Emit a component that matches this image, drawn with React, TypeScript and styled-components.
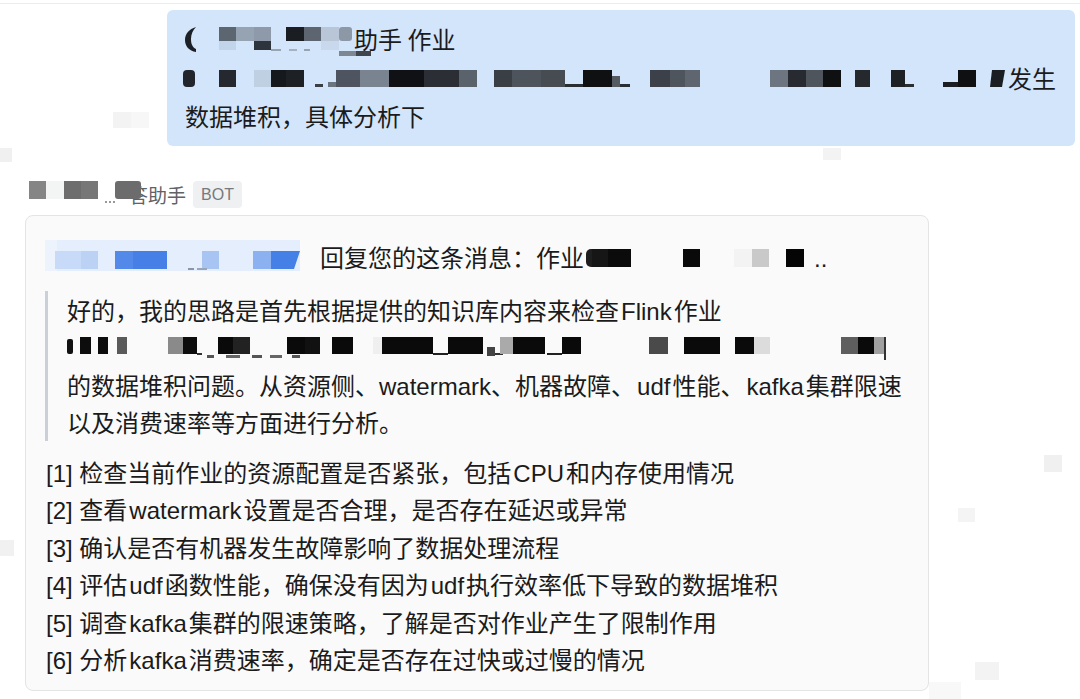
import React from "react";
import styled, { createGlobalStyle } from "styled-components";

type Cell = [number, number, number, number, string, number?];

const Global = createGlobalStyle`
  html, body { margin: 0; padding: 0; background: #ffffff; }
  body {
    font-family: "Noto Sans CJK SC", "Noto Sans", sans-serif;
    color: #1b1b1b;
  }
`;

const Page = styled.div`
  position: relative;
  width: 1080px;
  height: 699px;
  overflow: hidden;
  box-sizing: border-box;
  padding-top: 3px;
  display: flex;
  flex-direction: column;
`;

const WatermarkLayer = styled.svg`
  position: absolute;
  left: 0;
  top: 0;
  pointer-events: none;
`;

const TopRule = styled.div`
  height: 1px;
  background: #ececec;
`;

const Bubble = styled.div`
  position: relative;
  align-self: flex-end;
  margin: 6px 5px 0 0;
  width: 908px;
  box-sizing: border-box;
  padding: 10px 18px 10px 18px;
  background: #d2e5fb;
  border-radius: 6px;
  font-size: 24px;
  line-height: 38.5px;
`;

/* a line of plain text (may hold inline latin spans) */
const Line = styled.div<{ $h: number }>`
  white-space: nowrap;
  height: ${(p) => p.$h}px;
`;

/* a line that mixes redaction mosaics with text */
const MixRow = styled.div<{ $h: number }>`
  display: flex;
  align-items: center;
  white-space: nowrap;
  height: ${(p) => p.$h}px;
`;

const Txt = styled.span``;

const En = styled.span<{ $gap?: number }>`
  font-family: "Liberation Sans", Arial, sans-serif;
  line-height: 1;
  margin: 0 ${(p) => p.$gap ?? 2}px;
`;

const Header = styled.div`
  position: relative;
  display: flex;
  align-items: center;
  height: 27px;
  margin: 35px 0 0 29px;
`;

const SenderName = styled.span`
  font-size: 19px;
  line-height: 27px;
  color: #606266;
`;

const BotTag = styled.span`
  margin-left: 7px;
  height: 27px;
  padding: 0 8px;
  border-radius: 4px;
  background: #eff0f1;
  color: #76797e;
  font-family: "Liberation Sans", Arial, sans-serif;
  font-size: 16px;
  line-height: 27px;
`;

const Card = styled.div`
  position: relative;
  margin: 7px 0 0 25px;
  width: 904px;
  box-sizing: border-box;
  background: #fafafa;
  border: 1px solid #e4e4e4;
  border-radius: 8px;
  padding: 22px 20px 12px 20px;
  font-size: 24px;
  line-height: 37.5px;
`;

const Quote = styled.div`
  margin: 15.5px 0 0 -1px;
  border-left: 3px solid #cbd0d8;
  padding-left: 19px;
`;

const List = styled.div`
  margin-top: 12px;
`;

const MosaicSvg = styled.svg<{ $ml?: number; $mr?: number }>`
  display: block;
  flex-shrink: 0;
  overflow: visible;
  margin-left: ${(p) => p.$ml ?? 0}px;
  margin-right: ${(p) => p.$mr ?? 0}px;
`;

const OverlayMosaic = styled(MosaicSvg)`
  position: relative;
  z-index: 1;
`;

function Cells({ cells }: { cells: Cell[] }) {
  return (
    <>
      {cells.map(([x, y, w, h, c, rx], i) => (
        <rect key={i} x={x} y={y} width={w} height={h} fill={c} rx={rx ?? 0} />
      ))}
    </>
  );
}

/* ---------- mosaic data ---------- */

const faintMarks: Cell[] = [
  [113, 112, 18, 16, "#f3f3f3"],
  [131, 112, 18, 16, "#f7f7f7"],
  [0, 148, 12, 14, "#f0f0f0"],
  [823, 148, 18, 12, "#f3f3f3"],
  [1044, 455, 18, 17, "#f0f0f0"],
  [958, 508, 17, 14, "#f4f4f4"],
  [0, 540, 14, 16, "#f1f1f1"],
  [975, 662, 24, 18, "#f3f3f3"],
  [929, 682, 32, 17, "#f8f8f8"],
];

const bubbleLine1: Cell[] = [
  [36, 5, 17, 14, "#5c6670"],
  [53, 5, 18, 14, "#96a3b2"],
  [71, 5, 17, 14, "#8e9aa9"],
  [103, 5, 18, 14, "#1a1d22"],
  [121, 5, 17, 14, "#5d6670"],
  [138, 5, 18, 14, "#b8c6d8"],
  [156, 5, 13, 14, "#8d98a6", 3],
  [36, 19, 17, 9, "#c2d4ea"],
  [71, 19, 17, 9, "#2e343c"],
  [138, 19, 18, 9, "#c9d8ec"],
  [88, 27, 10, 2, "#9aa4b0"],
  [106, 27, 8, 2, "#a8b2be"],
  [121, 27, 6, 2, "#9aa4b0"],
  [156, 29, 17, 5, "#7d8794"],
  [173, 29, 15, 5, "#3f454d"],
];

const bubbleLine2: Cell[] = [
  [0, 6, 12, 17, "#22262c", 4],
  [36, 6, 17, 17, "#25292f"],
  [71, 6, 17, 17, "#c0d0e3"],
  [88, 6, 15, 17, "#15181c"],
  [103, 6, 18, 17, "#1d2024"],
  [132, 20, 8, 3, "#3a3f46"],
  [145, 18, 8, 5, "#6c7480"],
  [153, 6, 24, 17, "#4e5560"],
  [177, 6, 29, 17, "#7a8490"],
  [206, 6, 35, 17, "#0f1114"],
  [241, 6, 35, 17, "#2b2f35"],
  [276, 6, 18, 17, "#5a626c"],
  [311, 6, 18, 17, "#3a3f46"],
  [329, 6, 29, 17, "#4e545c"],
  [358, 6, 24, 17, "#474c53"],
  [382, 20, 18, 3, "#2a2e33"],
  [400, 6, 29, 17, "#0e1012"],
  [429, 12, 8, 11, "#555b63"],
  [437, 20, 10, 3, "#2a2e33"],
  [467, 6, 20, 17, "#3c4048"],
  [487, 6, 15, 17, "#4f555d"],
  [502, 6, 15, 17, "#5f666f"],
  [587, 6, 18, 17, "#6d7580"],
  [605, 6, 18, 17, "#272b31"],
  [623, 6, 17, 17, "#4f555d"],
  [640, 6, 18, 17, "#0e1012"],
  [672, 6, 15, 17, "#25292e"],
  [708, 6, 14, 17, "#1d2125"],
  [722, 20, 9, 3, "#2a2e33"],
  [760, 18, 15, 5, "#1a1d21"],
  [775, 6, 18, 17, "#0e1012"],
];

const headerCells: Cell[] = [
  [0, 0, 17, 18, "#858585"],
  [17, 0, 18, 18, "#f3f4f4"],
  [35, 0, 17, 18, "#6d6d6d"],
  [52, 0, 17, 18, "#777777"],
  [86, 0, 26, 18, "#6c6c6c", 3],
  [76, 20, 2, 2, "#999999"],
  [80, 20, 2, 2, "#999999"],
  [84, 20, 2, 2, "#999999"],
];

const bandCells: Cell[] = [
  [0, 1, 255, 31, "#e5eefc"],
  [0, 1, 12, 31, "#edf3fd"],
  [10, 12, 26, 18, "#c7daf7"],
  [36, 12, 17, 18, "#bcd2f5"],
  [70, 12, 18, 18, "#5389e8"],
  [88, 12, 34, 18, "#4680e6"],
  [157, 12, 17, 18, "#a7c4f3"],
  [208, 12, 18, 18, "#8bb1f0"],
  [143, 29, 6, 2, "#8a96a8"],
  [152, 29, 10, 2, "#9aa6b8"],
];

const replyBlack: Cell[] = [
  [2, 10, 12, 18, "#1e1e1e", 5],
  [8, 10, 16, 18, "#161616"],
  [24, 10, 23, 18, "#0b0b0b"],
  [99, 10, 17, 18, "#0a0a0a"],
  [150, 10, 18, 18, "#f3f3f3"],
  [168, 10, 17, 18, "#c9c9c9"],
  [202, 10, 18, 18, "#050505"],
];

const quoteLine2: Cell[] = [
  [0, 6, 6, 15, "#111111", 2],
  [13, 4, 11, 17, "#0d0d0d"],
  [31, 4, 10, 17, "#0d0d0d"],
  [50, 4, 10, 17, "#5a5a5a"],
  [101, 4, 15, 17, "#8a8a8a"],
  [116, 4, 14, 17, "#0d0d0d"],
  [130, 20, 5, 2, "#333333"],
  [151, 4, 15, 17, "#0a0a0a"],
  [166, 4, 17, 17, "#222222"],
  [140, 22, 7, 3, "#555555"],
  [159, 22, 14, 3, "#666666"],
  [185, 22, 10, 3, "#555555"],
  [203, 22, 12, 3, "#666666"],
  [225, 22, 8, 3, "#555555"],
  [220, 4, 18, 17, "#0a0a0a"],
  [238, 4, 15, 17, "#111111"],
  [265, 4, 21, 17, "#0a0a0a"],
  [306, 4, 9, 17, "#efefef"],
  [315, 4, 51, 17, "#0a0a0a"],
  [366, 20, 15, 2, "#222222"],
  [381, 4, 35, 17, "#0a0a0a"],
  [420, 14, 8, 9, "#444444"],
  [428, 20, 8, 2, "#333333"],
  [433, 4, 13, 17, "#aaaaaa"],
  [446, 4, 32, 17, "#0a0a0a"],
  [480, 20, 15, 2, "#222222"],
  [495, 4, 19, 17, "#0a0a0a"],
  [582, 4, 19, 17, "#4a4a4a"],
  [617, 4, 36, 17, "#0a0a0a"],
  [668, 4, 19, 17, "#0a0a0a"],
  [687, 4, 16, 17, "#dcdcdc"],
  [774, 4, 17, 17, "#5e5e5e"],
  [791, 4, 16, 17, "#0a0a0a"],
  [807, 4, 10, 17, "#a0a0a0"],
  [817, 4, 2, 23, "#333333"],
];

export default function App() {
  return (
    <>
      <Global />
      <Page>
        <WatermarkLayer width={1080} height={699}>
          <Cells cells={faintMarks} />
        </WatermarkLayer>
        <TopRule />
        <Bubble>
          <MixRow $h={38.5}>
            <MosaicSvg width={171} height={34} $ml={-2}>
              <path
                d="M13 5 C6 7 2 12 2 18 C2 24 6 29 13 30 L13 27 C9 25 8 21 8 17 C8 12 10 8 13 5 Z"
                fill="#1d2026"
              />
              <Cells cells={bubbleLine1} />
            </MosaicSvg>
            <Txt>助手 作业</Txt>
          </MixRow>
          <MixRow $h={38.5}>
            <MosaicSvg width={822} height={28} $ml={-2} $mr={3}>
              <Cells cells={bubbleLine2} />
              <polygon points="809,6 822,6 819,23 807,23" fill="#1a1d21" />
            </MosaicSvg>
            <Txt>发生</Txt>
          </MixRow>
          <Line $h={38.5}>数据堆积，具体分析下</Line>
        </Bubble>

        <Header>
          <OverlayMosaic width={112} height={27} $mr={-12}>
            <Cells cells={headerCells} />
          </OverlayMosaic>
          <SenderName>答助手</SenderName>
          <BotTag>BOT</BotTag>
        </Header>

        <Card>
          <MixRow $h={37.5}>
            <MosaicSvg width={255} height={34} $ml={-1} $mr={20}>
              <Cells cells={bandCells} />
              <polygon points="226,12 255,12 249,30 226,30" fill="#4580e6" />
            </MosaicSvg>
            <Txt>回复您的这条消息：作业</Txt>
            <MosaicSvg width={220} height={34} $mr={10}>
              <Cells cells={replyBlack} />
            </MosaicSvg>
            <Txt>
              <En $gap={0}>..</En>
            </Txt>
          </MixRow>

          <Quote>
            <Line $h={37.5}>
              好的，我的思路是首先根据提供的知识库内容来检查<En>Flink</En>作业
            </Line>
            <MixRow $h={37.5}>
              <MosaicSvg width={820} height={28}>
                <Cells cells={quoteLine2} />
              </MosaicSvg>
            </MixRow>
            <Line $h={37.5}>
              的数据堆积问题。从资源侧、<En $gap={0}>watermark</En>、机器故障、<En>udf</En>性能、<En>kafka</En>集群限速
            </Line>
            <Line $h={37.5}>以及消费速率等方面进行分析。</Line>
          </Quote>

          <List>
            <Line $h={37.5}>
              <En $gap={0}>[1] </En>检查当前作业的资源配置是否紧张，包括<En>CPU</En>和内存使用情况
            </Line>
            <Line $h={37.5}>
              <En $gap={0}>[2] </En>查看<En>watermark</En>设置是否合理，是否存在延迟或异常
            </Line>
            <Line $h={37.5}>
              <En $gap={0}>[3] </En>确认是否有机器发生故障影响了数据处理流程
            </Line>
            <Line $h={37.5}>
              <En $gap={0}>[4] </En>评估<En>udf</En>函数性能，确保没有因为<En>udf</En>执行效率低下导致的数据堆积
            </Line>
            <Line $h={37.5}>
              <En $gap={0}>[5] </En>调查<En>kafka</En>集群的限速策略，了解是否对作业产生了限制作用
            </Line>
            <Line $h={37.5}>
              <En $gap={0}>[6] </En>分析<En>kafka</En>消费速率，确定是否存在过快或过慢的情况
            </Line>
          </List>
        </Card>
      </Page>
    </>
  );
}
